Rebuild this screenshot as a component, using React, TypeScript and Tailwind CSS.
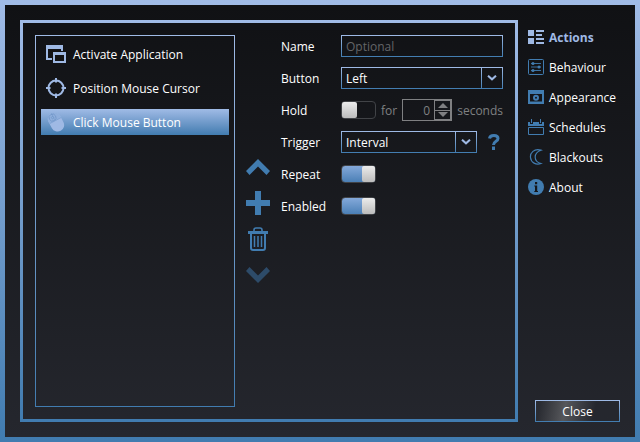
import React, { useState } from "react";

const edge = "[border-image:linear-gradient(#a0bbe6,#417cb0)_1]";

const WindowsIcon = () => (
  <svg width="20" height="20" viewBox="0 0 20 20" fill="#9fb9e4" aria-hidden="true">
    <path fillRule="evenodd" d="M0 1h17v6h-2V5H2v9h4v2H0V1Z" />
    <path fillRule="evenodd" d="M7 8h13v11H7V8Zm2 3v6h9v-6H9Z" />
  </svg>
);

const CrosshairIcon = () => (
  <svg width="20" height="20" viewBox="0 0 20 20" fill="none" stroke="#9fb9e4" strokeWidth="2" aria-hidden="true">
    <circle cx="10" cy="10" r="7.500" />
    <path d="M10 0v4.500M10 15.500V20M0 10h4.500M15.500 10H20" />
  </svg>
);

const MouseIcon = () => (
  <svg width="20" height="22" viewBox="0 0 20 22" aria-hidden="true">
    <g transform="rotate(-28 10 11)">
      <path d="M3.500 7.500a6.500 6.500 0 0 1 13 0v7a6.500 6.500 0 0 1-13 0Z" fill="#9fb9e4" />
      <path d="M3.500 9.500v-2a6.500 6.500 0 0 1 13 0v2Z" fill="#8fafdc" />
      <path d="M10 1v8M3.500 9.500h13" stroke="#7a9fd0" strokeWidth="0.700" />
      <circle cx="9" cy="5.500" r="3.500" fill="none" stroke="#7197c9" strokeWidth="0.800" />
      <circle cx="9" cy="5.500" r="1.200" fill="none" stroke="#7197c9" strokeWidth="0.700" />
    </g>
  </svg>
);

const ActionsIcon = () => (
  <svg width="16" height="16" viewBox="0 0 16 16" fill="#9fb9e4" aria-hidden="true">
    <path d="M0 1h6v6H0zM0 9h6v6H0zM8 1h8v2H8zM8 5h6v2H8zM8 9h8v2H8zM8 13h8v2H8z" />
  </svg>
);

const BehaviourIcon = () => (
  <svg width="16" height="16" viewBox="0 0 16 16" fill="none" stroke="#417cb0" aria-hidden="true">
    <rect x="0.500" y="0.500" width="15" height="15" rx="1" />
    <path d="M3 4.500h10M3 8h10M3 11.500h10" strokeWidth="0.900" />
    <g fill="#417cb0" stroke="none">
      <circle cx="5" cy="4.500" r="1.500" />
      <circle cx="11" cy="8" r="1.500" />
      <circle cx="5" cy="11.500" r="1.500" />
    </g>
  </svg>
);

const AppearanceIcon = () => (
  <svg width="16" height="14" viewBox="0 0 16 14" fill="#417cb0" aria-hidden="true">
    <path fillRule="evenodd" d="M0 0h16v14H0V0Zm2 4v7.500h12V4H2Z" />
    <circle cx="8" cy="7.700" r="2" fill="none" stroke="#417cb0" strokeWidth="2" />
  </svg>
);

const SchedulesIcon = () => (
  <svg width="16" height="16" viewBox="0 0 16 16" fill="#417cb0" aria-hidden="true">
    <path d="M0 3h2v2h3V3h6v2h3V3h2v4H0zM3 0h1v4H3zM12 0h1v4h-1z" />
    <path d="M.5 8.500h15v7H.5z" fill="none" stroke="#417cb0" />
  </svg>
);

const BlackoutsIcon = () => (
  <svg width="16" height="16" viewBox="0 0 16 16" fill="none" stroke="#417cb0" strokeWidth="1.200" aria-hidden="true">
    <path d="M13 1.200C6 -.8 2 4 2.500 8.500 3 13.500 8 16.500 13 14.500 5.500 12.500 5 4 13 1.200Z" />
  </svg>
);

const AboutIcon = () => (
  <svg width="16" height="16" viewBox="0 0 16 16" aria-hidden="true">
    <circle cx="8" cy="8" r="8" fill="#417cb0" />
    <path d="M7 3h2.200v2.200H7zM6.300 6.500h2.900V12h.8v1H6.300v-1h.7V7.500h-.7z" fill="#15171b" />
  </svg>
);

const ChevronUp = () => (
  <svg width="24" height="24" viewBox="0 0 24 24" fill="#417cb0" aria-hidden="true">
    <path d="M12 4 24 16l-3.500 4L12 11.500 3.500 20 0 16Z" />
  </svg>
);

const PlusIcon = () => (
  <svg width="24" height="24" viewBox="0 0 24 24" fill="#417cb0" aria-hidden="true">
    <path d="M9 0h6v9h9v6h-9v9H9v-9H0V9h9z" />
  </svg>
);

const TrashIcon = () => (
  <svg width="24" height="24" viewBox="0 0 24 24" fill="none" stroke="#417cb0" aria-hidden="true">
    <path d="M2 5.500h20" strokeWidth="3" />
    <path d="M8 4.500V3q0-2 2-2h4q2 0 2 2v1.500" strokeWidth="1.600" />
    <path d="M5 7v14q0 2 2 2h10q2 0 2-2V7" strokeWidth="2" />
    <path d="M8.500 9v11M12 9v11M15.500 9v11" strokeWidth="1.500" />
  </svg>
);

const ChevronDown = () => (
  <svg width="24" height="24" viewBox="0 0 24 24" fill="#2d4b69" aria-hidden="true">
    <path d="M12 20 24 8l-3.500-4L12 12.500 3.500 4 0 8Z" />
  </svg>
);

const SmallChevron = () => (
  <svg width="10" height="6" viewBox="0 0 10 6" fill="none" stroke="#9fb9e4" strokeWidth="2" aria-hidden="true">
    <path d="M1 .7 5 4.300 9 .7" />
  </svg>
);

const actions = [
  { name: "Activate Application", icon: <WindowsIcon /> },
  { name: "Position Mouse Cursor", icon: <CrosshairIcon /> },
  { name: "Click Mouse Button", icon: <MouseIcon /> },
];

const pages = [
  { name: "Actions", icon: <ActionsIcon /> },
  { name: "Behaviour", icon: <BehaviourIcon /> },
  { name: "Appearance", icon: <AppearanceIcon /> },
  { name: "Schedules", icon: <SchedulesIcon /> },
  { name: "Blackouts", icon: <BlackoutsIcon /> },
  { name: "About", icon: <AboutIcon /> },
];

function Toggle({ id, on = false }: { id: string; on?: boolean }) {
  return (
    <input
      id={id}
      type="checkbox"
      role="switch"
      defaultChecked={on}
      className="flex h-[18px] w-[35px] shrink-0 appearance-none rounded-sm border border-[#414347] bg-transparent before:h-4 before:w-[15px] before:rounded-xs before:bg-linear-to-b before:from-[#ececec] before:to-[#bcbcbc] checked:justify-end checked:bg-linear-to-b checked:from-[#84a9da] checked:to-[#4b80b6] checked:before:w-[13px]"
    />
  );
}

function Choice({ id, options }: { id: string; options: string[] }) {
  return (
    <div className={`relative flex h-[22px] min-w-0 flex-1 border ${edge}`}>
      <select id={id} className="min-w-0 flex-1 appearance-none bg-transparent pt-0.5 pl-1 outline-none">
        {options.map((option) => (
          <option key={option} className="bg-[#15171b]">{option}</option>
        ))}
      </select>
      <span className={`pointer-events-none absolute inset-y-0 right-0 flex w-[21px] items-center justify-center border-l ${edge}`}>
        <SmallChevron />
      </span>
    </div>
  );
}

function Row({ id, label, children }: { id: string; label: string; children: React.ReactNode }) {
  return (
    <div className="flex h-[22px] items-center">
      <label htmlFor={id} className="w-[60px] shrink-0 pt-0.5">{label}</label>
      {children}
    </div>
  );
}

export default function App() {
  const [selected, setSelected] = useState(2);
  const [page, setPage] = useState(0);

  return (
    <div className={`flex min-h-screen border-[5px] bg-linear-to-b from-[#101114] to-[#25272e] p-[15px] font-['Open_Sans',sans-serif] text-xs leading-4 text-white ${edge}`}>
      <main className={`flex min-w-0 flex-1 gap-[11px] border-[3px] p-3 ${edge}`}>
        <ul className={`flex w-[200px] shrink-0 flex-col gap-2 border p-[5px] ${edge}`}>
          {actions.map((action, i) => (
            <li key={action.name}>
              <button
                type="button"
                onClick={() => setSelected(i)}
                className={`flex h-[26px] w-full items-center gap-[7px] pl-[5px] text-left ${i === selected ? "bg-linear-to-b from-[#a0bbe6] to-[#417cb0]" : ""}`}
              >
                {action.icon}
                <span className="pt-0.5">{action.name}</span>
              </button>
            </li>
          ))}
        </ul>

        <div className="flex w-6 shrink-0 flex-col justify-center gap-3">
          <button type="button" aria-label="Move up"><ChevronUp /></button>
          <button type="button" aria-label="Add"><PlusIcon /></button>
          <button type="button" aria-label="Delete"><TrashIcon /></button>
          <button type="button" aria-label="Move down" disabled><ChevronDown /></button>
        </div>

        <form className="flex min-w-0 flex-1 flex-col gap-[10px]">
          <Row id="name" label="Name">
            <input id="name" type="text" placeholder="Optional" className={`h-[22px] min-w-0 flex-1 border bg-transparent px-1 outline-none placeholder:text-[#646568] ${edge}`} />
          </Row>
          <Row id="button" label="Button">
            <Choice id="button" options={["Left", "Middle", "Right"]} />
          </Row>
          <Row id="hold" label="Hold">
            <Toggle id="hold" />
            <div className="flex items-center gap-[5px] pl-[5px] text-[#7f8082]">
              <label htmlFor="duration" className="pt-0.5">for</label>
              <div className="flex h-[22px] w-[50px] border border-[#7f8082]">
                <input id="duration" type="number" defaultValue={0} disabled className="min-w-0 flex-1 bg-transparent pt-0.5 pr-1 text-right [appearance:textfield] [&::-webkit-inner-spin-button]:hidden" />
                <div className="flex w-[17px] flex-col gap-px bg-[#7f8082] p-px">
                  <button type="button" disabled aria-label="Increase" className="flex flex-1 items-center justify-center bg-[#15171b]">
                    <svg width="10" height="5" viewBox="0 0 10 5" fill="#7f8082"><path d="M0 5 5 0l5 5z" /></svg>
                  </button>
                  <button type="button" disabled aria-label="Decrease" className="flex flex-1 items-center justify-center bg-[#15171b]">
                    <svg width="10" height="5" viewBox="0 0 10 5" fill="#7f8082"><path d="M0 0h10L5 5z" /></svg>
                  </button>
                </div>
              </div>
              <span className="pt-0.5">seconds</span>
            </div>
          </Row>
          <Row id="trigger" label="Trigger">
            <Choice id="trigger" options={["Interval", "Hotkey"]} />
            <button type="button" aria-label="Help" className="flex w-[26px] justify-end pr-[3px]">
              <svg width="12" height="16" viewBox="0 0 12 16" fill="none" stroke="#417cb0" strokeWidth="3" aria-hidden="true">
                <path d="M1.500 4.500C2 .5 10 .5 10 4.500 10 7.500 5.500 7 5.500 11M5.500 12.500V16" />
              </svg>
            </button>
          </Row>
          <Row id="repeat" label="Repeat">
            <Toggle id="repeat" on />
          </Row>
          <Row id="enabled" label="Enabled">
            <Toggle id="enabled" on />
          </Row>
        </form>
      </main>

      <div className="flex w-[102px] shrink-0 flex-col justify-between">
        <nav className="flex flex-col gap-2 pt-1.5 pl-2.5">
          {pages.map((item, i) => (
            <button
              key={item.name}
              type="button"
              onClick={() => setPage(i)}
              className={`flex h-[22px] items-center gap-[5px] ${i === page ? "font-bold text-[#9fb9e4]" : ""}`}
            >
              {item.icon}
              <span className="pt-0.5">{item.name}</span>
            </button>
          ))}
        </nav>
        <button type="button" className={`h-[22px] w-[85px] self-end border bg-linear-100 from-[#2a2c32] from-5% via-[#56575b] via-35% to-[#25272e] to-70% pt-0.5 ${edge}`}>
          Close
        </button>
      </div>
    </div>
  );
}
